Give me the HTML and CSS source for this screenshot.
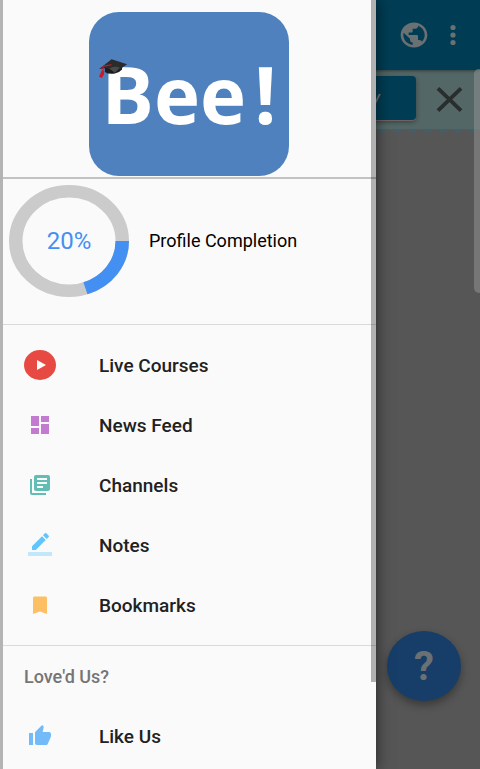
FILE: index.html
```
<!DOCTYPE html>
<html lang="en">
<head>
<meta charset="utf-8">
<meta name="viewport" content="width=device-width, initial-scale=1">
<title>Bee!</title>
<link rel="stylesheet" href="styles.css">
</head>
<body>
<main class="page">
  <header class="toolbar">
    <button class="icon-button" aria-label="Language">
      <svg class="globe" viewBox="0 0 24 24" preserveAspectRatio="none"><path d="M12 2C6.48 2 2 6.48 2 12s4.48 10 10 10 10-4.480 10-10S17.520 2 12 2zm-1 17.930c-3.950-.49-7-3.850-7-7.930 0-.62.08-1.210.21-1.790L9 15v1c0 1.100.9 2 2 2v1.930zm6.900-2.540c-.26-.81-1-1.390-1.900-1.390h-1v-3c0-.55-.45-1-1-1H8v-2h2c.55 0 1-.45 1-1V7h2c1.100 0 2-.9 2-2v-.41c2.930 1.190 5 4.060 5 7.410 0 2.080-.8 3.970-2.100 5.390z"/></svg>
    </button>
    <button class="icon-button menu-button" aria-label="More options">
      <svg class="dots" viewBox="0 0 8 24"><circle cx="4" cy="4.500" r="2.600"/><circle cx="4" cy="12" r="2.600"/><circle cx="4" cy="19.500" r="2.600"/></svg>
    </button>
  </header>
  <section class="banner">
    <button class="buy">Buy</button>
    <button class="icon-button" aria-label="Close">
      <svg class="close" viewBox="0 0 28 26"><path d="M2 1.500 26 24.500M26 1.500 2 24.500"/></svg>
    </button>
  </section>
  <svg class="scallop" aria-hidden="true"><defs><pattern id="wave" width="15" height="4" patternUnits="userSpaceOnUse"><path d="M0 0H15V1L12 1 7.500 4 3 1H0z"/></pattern></defs><rect width="100%" height="4" fill="url(#wave)"/></svg>
  <div class="page-scroll"></div>
  <button class="help" aria-label="Help">?</button>
</main>

<aside class="drawer">
  <div class="brand">
    <div class="logo">
      <span class="logo-text"><span>Bee</span><span>!</span></span>
      <svg class="cap" viewBox="0 0 30 22" aria-hidden="true">
        <path d="M6.500 9v4.500Q10 16.200 17 15.200Q22 14 24.500 11V6z" fill="#1c1c1c"/>
        <path d="M.5 10.500 13.500.3 29.700 5.500 17 14.500Q12 9.500 7 9.800z" fill="#2b2b2b"/>
        <path d="M11 10Q16 7 22 9L17 14.500z" fill="#4a4a4a"/>
        <path d="M13.500 6 5 7.500Q4 8 4.700 12" fill="none" stroke="#cf1826" stroke-width="1.200"/>
        <path d="M3.500 11.500 5.800 12 5.500 16 3.500 20 .3 18.500z" fill="#cf1826"/>
      </svg>
    </div>
  </div>
  <section class="profile">
    <div class="progress">
      <svg class="ring" viewBox="0 0 120 120" preserveAspectRatio="none" aria-hidden="true">
        <circle cx="60" cy="60" r="53.250" class="ring-track"/>
        <circle cx="60" cy="60" r="53.250" class="ring-value" pathLength="100"/>
      </svg>
      <span class="percent">20%</span>
    </div>
    <span class="profile-label">Profile Completion</span>
  </section>
  <nav class="group">
    <a class="item" href="#live"><span class="icon"><svg viewBox="0 0 32 30" width="32" height="30"><ellipse cx="16" cy="15" rx="16" ry="15" fill="#e74a43"/><path d="M13 10v10l9-5z" fill="#fff"/></svg></span>Live Courses</a>
    <a class="item" href="#news"><span class="icon"><svg viewBox="0 0 24 24" width="24" height="24"><path fill="#c27bd1" d="M3 13h8V3H3v10zm0 8h8v-6H3v6zm10 0h8V11h-8v10zm0-18v6h8V3h-8z"/></svg></span>News Feed</a>
    <a class="item" href="#channels"><span class="icon"><svg viewBox="0 0 24 24" width="24" height="24"><path fill="#62bdb4" d="M4 6H2v14c0 1.100.9 2 2 2h14v-2H4V6zm16-4H8c-1.100 0-2 .9-2 2v12c0 1.100.9 2 2 2h12c1.100 0 2-.9 2-2V4c0-1.100-.9-2-2-2zm-1 9H9V9h10v2zm-4 4H9v-2h6v2zm4-8H9V5h10v2z"/></svg></span>Channels</a>
    <a class="item" href="#notes"><span class="icon"><svg viewBox="0 0 24 24" width="24" height="24"><path fill="#63c5fa" d="M17.750 7 14 3.250l-10 10V17h3.750l10-10zm2.960-2.960c.39-.39.39-1.020 0-1.410L18.370.29c-.39-.39-1.020-.39-1.410 0L15 2.250 18.750 6l1.960-1.960z"/><path fill="#c0e7fa" d="M0 19h24v4H0z"/></svg></span>Notes</a>
    <a class="item" href="#bookmarks"><span class="icon"><svg viewBox="0 0 24 24" width="24" height="24"><path fill="#fdbf64" d="M17.500 3.500h-11C5.600 3.500 5 4.100 5 5v16l7-2.500 7 2.500V5c0-.9-.6-1.500-1.500-1.500z"/></svg></span>Bookmarks</a>
  </nav>
  <nav class="group" aria-labelledby="loved">
    <h2 class="group-title" id="loved">Love'd Us?</h2>
    <a class="item" href="#like"><span class="icon"><svg viewBox="0 0 24 24" width="24" height="24"><path fill="#73baf8" d="M1 21h4V9H1v12zm22-11c0-1.100-.9-2-2-2h-6.310l.95-4.570.03-.32c0-.41-.17-.79-.44-1.060L14.170 1 7.590 7.590C7.220 7.950 7 8.450 7 9v10c0 1.100.9 2 2 2h9c.83 0 1.540-.5 1.840-1.220l3.020-7.050c.09-.23.14-.47.14-.73v-2z"/></svg></span>Like Us</a>
  </nav>
  <div class="drawer-scroll"></div>
</aside>
</body>
</html>
```
FILE: styles.css
```
* {
  box-sizing: border-box;
}

body {
  margin: 0;
  font-family: Roboto, "Liberation Sans", sans-serif;
  background: #565656;
}

button {
  border: 0;
  padding: 0;
  font: inherit;
}

svg {
  display: block;
}

.page {
  position: relative;
  height: 100vh;
  overflow: hidden;
}

.toolbar {
  display: flex;
  align-items: center;
  justify-content: flex-end;
  gap: 12px;
  height: 70px;
  padding-right: 16px;
  background: #003d54;
  box-shadow: 0 1px 3px rgba(0, 0, 0, 0.4);
  position: relative;
}

.icon-button {
  display: grid;
  place-items: center;
  background: none;
}

.globe {
  width: 32px;
  height: 30px;
  fill: #6b7072;
}

.menu-button {
  width: 22px;
}

.dots {
  width: 8px;
  height: 24px;
  fill: #6b7072;
}

.banner {
  display: flex;
  align-items: center;
  justify-content: flex-end;
  gap: 20px;
  height: 59px;
  padding-right: 17px;
  background: #536766;
}

.buy {
  width: 120px;
  height: 44px;
  margin-bottom: 3px;
  padding-right: 36px;
  border-radius: 4px;
  background: #003d54;
  box-shadow: 0 1px 1px rgba(120, 105, 105, 0.9), 0 2px 4px rgba(0, 0, 0, 0.4);
  color: #777;
  font-size: 20px;
  font-style: italic;
  text-align: right;
}

.close {
  width: 27px;
  height: 25px;
  fill: none;
  stroke: #292d2d;
  stroke-width: 4;
}

.scallop {
  width: 100%;
  height: 4px;
  fill: #40606c;
}

.page-scroll {
  position: absolute;
  top: 69px;
  right: 0;
  width: 6px;
  height: 224px;
  border-radius: 5px 0 0 5px;
  background: rgba(150, 150, 150, 0.5);
}

.help {
  position: absolute;
  right: 19px;
  bottom: 68px;
  width: 74px;
  height: 70px;
  border-radius: 50%;
  background: #163e69;
  box-shadow: 0 4px 8px rgba(0, 0, 0, 0.35);
  color: #6b7072;
  font-size: 40px;
  font-weight: 700;
}

.drawer {
  position: absolute;
  top: 0;
  left: 0;
  width: calc(100% - 104px);
  height: 100vh;
  overflow: hidden;
  border-left: 3px solid #b4b4b4;
  background: #fafafa;
  box-shadow: 0 0 14px rgba(0, 0, 0, 0.6);
}

.brand {
  display: flex;
  justify-content: center;
  padding: 12px 1px 1px 0;
  border-bottom: 2px solid #c2c2c2;
}

.logo {
  position: relative;
  display: grid;
  place-items: center;
  width: 200px;
  height: 164px;
  border-radius: 30px;
  background: #4e81bd;
}

.logo-text {
  display: flex;
  gap: 8px;
  color: #fff;
  font-family: "Open Sans", sans-serif;
  font-size: 78px;
  font-weight: 700;
  line-height: 80px;
}

.cap {
  position: absolute;
  top: 47px;
  left: 9px;
  width: 30px;
  height: 21px;
}

.profile {
  display: flex;
  align-items: flex-start;
  gap: 20px;
  height: 146px;
  padding: 6px;
  border-bottom: 1px solid #dadada;
}

.progress {
  position: relative;
  display: grid;
  place-items: center;
  width: 120px;
  height: 112px;
}

.ring {
  position: absolute;
  width: 100%;
  height: 100%;
  fill: none;
  stroke-width: 13.5;
}

.ring-track {
  stroke: #cbcbcb;
}

.ring-value {
  stroke: #4390f2;
  stroke-dasharray: 20 80;
}

.percent {
  color: #4390f2;
  font-size: 24px;
}

.profile-label {
  line-height: 112px;
  color: #000;
  font-size: 18px;
}

.group {
  padding: 10px 0;
  border-bottom: 1px solid #dadada;
}

.group:last-of-type {
  border-bottom: 0;
}

.item {
  display: flex;
  align-items: center;
  gap: 43px;
  height: 60px;
  padding-left: 21px;
  color: #212121;
  font-size: 19px;
  font-weight: 500;
  text-decoration: none;
}

.icon {
  display: grid;
  place-items: center;
  width: 32px;
}

.group-title {
  margin: 0 0 8px;
  padding-left: 21px;
  color: #757575;
  font-size: 18px;
  font-weight: 500;
  line-height: 42px;
}

.drawer-scroll {
  position: absolute;
  top: 0;
  right: 0;
  width: 5px;
  height: 682px;
  background: rgba(0, 0, 0, 0.29);
}
```
